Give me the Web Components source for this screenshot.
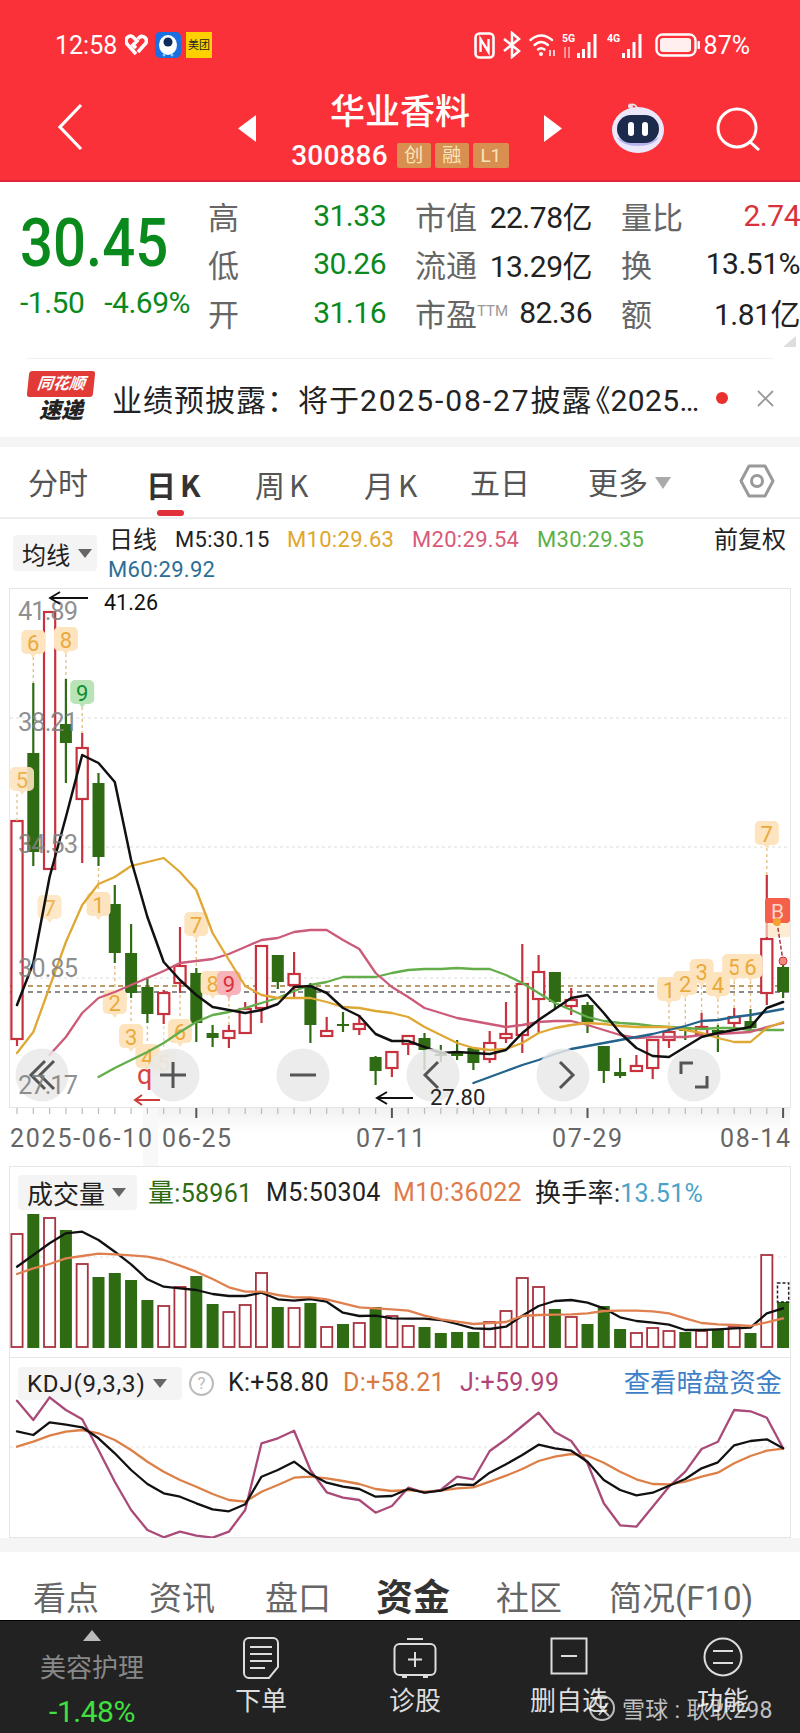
<!DOCTYPE html>
<html lang="zh">
<head>
<meta charset="utf-8">
<title>华业香料</title>
<style>
  html, body { margin: 0; padding: 0; background: #fff; }
  body {
    width: 800px;
    height: 1733px;
    overflow: hidden;
    display: flex;
    flex-direction: column;
    font-family: Roboto, "Noto Sans CJK SC", sans-serif;
  }
</style>
</head>
<body>
<stock-header></stock-header>
<quote-panel></quote-panel>
<news-strip></news-strip>
<period-tabs></period-tabs>
<kline-legend></kline-legend>
<kline-chart></kline-chart>
<volume-chart></volume-chart>
<kdj-chart></kdj-chart>
<detail-tabs></detail-tabs>
<bottom-bar></bottom-bar>

<script>
(() => {
  const X = i => 17 + 16.3 * i;

  // turn a list of y values into polyline points, offset is the crop origin I read them from
  const points = (vals, start = 0, off = 0, div = 1) =>
    vals.map((v, i) => `${X(i + start).toFixed(1)},${(off + v / div).toFixed(1)}`).join(' ');

  const line = (pts, color, w = 2.3) =>
    `<polyline points="${pts}" fill="none" stroke="${color}" stroke-width="${w}" stroke-linejoin="round" stroke-linecap="round"/>`;

  class Base extends HTMLElement {
    connectedCallback() {
      if (this.shadowRoot) { return; }
      this.attachShadow({ mode: 'open' });
      this.shadowRoot.innerHTML = this.render();
    }
  }

  class LegendChip extends Base {
    static get is() { return 'legend-chip'; }
    render() {
      return `
        <style>
          :host {
            display: inline-flex;
            align-items: center;
            box-sizing: border-box;
            background: #f5f4f4;
            border-radius: 4px;
            color: #222;
            font-size: 24px;
            padding-left: 9px;
            flex: none;
          }
          i {
            margin-left: 7px;
            width: 0;
            height: 0;
            border-left: 7px solid transparent;
            border-right: 7px solid transparent;
            border-top: 9px solid #666;
          }
        </style>
        <slot></slot><i></i>`;
    }
  }

  class StockHeader extends Base {
    static get is() { return 'stock-header'; }
    render() {
      return `
        <style>
          :host {
            display: block;
            flex: none;
            height: 182px;
            box-sizing: border-box;
            background: #fb3139;
            border-bottom: 2px solid #e2263a;
            color: #fff;
          }
          svg { display: block; flex: none; }
          .status {
            height: 90px;
            display: flex;
            align-items: center;
            justify-content: space-between;
            padding: 0 50px 0 55px;
            font-size: 25px;
          }
          .group { display: flex; align-items: center; }
          .nav { display: flex; align-items: flex-start; height: 90px; }
          .center { width: 288px; text-align: center; }
          .title { font-size: 35px; font-weight: 500; line-height: 44px; margin-top: 1px; }
          .sub { display: flex; align-items: center; justify-content: center; height: 40px; }
          .code { font-size: 28px; margin-right: 9px; font-weight: 500; letter-spacing: .2px; }
          .tag {
            background: #d88f50;
            color: #f9e6bd;
            font-size: 19px;
            width: 34px;
            height: 25px;
            line-height: 25px;
            text-align: center;
            margin-right: 4px;
            border-radius: 2px;
          }
        </style>
        <div class="status">
          <div class="group">
            <span>12:58</span>
            <svg style="margin-left:8px" width="23" height="22" viewBox="0 0 23 22"><path d="M11 20 L2 10 C-1 5 4 0 8 3 L12 7 L8 11 L11 14 M13 5 C16 0 23 3 21 9 L13 18" fill="none" stroke="#fff" stroke-width="3.5"/></svg>
            <svg style="margin-left:7px" width="26" height="26" viewBox="0 0 26 26"><rect width="26" height="26" rx="5" fill="#1c6fe0"/><ellipse cx="13" cy="13" rx="9" ry="10" fill="#fff"/><circle cx="13" cy="10" r="4.5" fill="#0d2a5c"/><circle cx="9" cy="23" r="1.4" fill="#8fd0ff"/><circle cx="17" cy="23" r="1.4" fill="#8fd0ff"/></svg>
            <svg style="margin-left:5px" width="26" height="26" viewBox="0 0 26 26"><rect width="26" height="26" fill="#fdd000"/><text x="13" y="17" font-size="11" text-anchor="middle" fill="#222">美团</text></svg>
          </div>
          <div class="group">
            <svg width="21" height="27" viewBox="0 0 21 27"><rect x="1.5" y="1.5" width="18" height="24" rx="4" fill="none" stroke="#fff" stroke-width="2.6"/><path d="M6.5 20V7l8 13V7" fill="none" stroke="#fff" stroke-width="2.4"/></svg>
            <svg style="margin-left:7px" width="20" height="28" viewBox="0 0 20 28"><path d="M2 8l15 12-7 6V2l7 6L2 20" fill="none" stroke="#fff" stroke-width="2.5"/></svg>
            <svg style="margin-left:7px" width="28" height="26" viewBox="0 0 28 26"><g fill="none" stroke="#fff" stroke-width="2.4" stroke-linecap="round"><path d="M1.5 8Q12-1 23 8"/><path d="M5.5 13Q12 7 19 13"/><path d="M9 17.5Q12 15 15.5 17.5"/></g><circle cx="12" cy="22" r="2" fill="#fff"/><path d="M21 24v-6M25 18v6" stroke="#fff" stroke-width="1.5"/></svg>
            <svg style="margin-left:5px" width="38" height="27" viewBox="0 0 38 27"><text x="0" y="10" font-size="10.5" font-weight="700" fill="#fff">5G</text><path d="M3 26V15M7 26V15" stroke="#ffb3b3" stroke-width="1.5"/><path d="M16.5 26v-5M21.5 26V17M27 26V10M33 26V2" stroke="#fff" stroke-width="3"/></svg>
            <svg style="margin-left:7px" width="38" height="27" viewBox="0 0 38 27"><text x="0" y="10" font-size="10.5" font-weight="700" fill="#fff">4G</text><path d="M16.5 26v-5M21.5 26V17M27 26V10M33 26V2" stroke="#fff" stroke-width="3"/></svg>
            <svg style="margin-left:10px" width="45" height="24" viewBox="0 0 45 24"><rect x="1.5" y="1.5" width="39" height="21" rx="6" fill="none" stroke="#fff" stroke-width="2.4"/><rect x="5" y="5" width="31" height="14" rx="3" fill="#fff" opacity=".92"/><rect x="42.5" y="8" width="2.5" height="8" rx="1" fill="#fff"/></svg>
            <span style="margin-left:4px">87%</span>
          </div>
        </div>
        <div class="nav">
          <svg style="margin:13px 0 0 57px" width="26" height="48" viewBox="0 0 26 48"><path d="M24 2L3 24l21 22" fill="none" stroke="#fff" stroke-width="3.2"/></svg>
          <svg style="margin:25px 0 0 155px" width="18" height="27" viewBox="0 0 18 27"><path d="M18 0v27L0 13.5z" fill="#fff"/></svg>
          <div class="center">
            <div class="title">华业香料</div>
            <div class="sub">
              <span class="code">300886</span>
              <span class="tag">创</span><span class="tag">融</span><span class="tag" style="width:36px;margin:0">L1</span>
            </div>
          </div>
          <svg style="margin-top:25px" width="18" height="27" viewBox="0 0 18 27"><path d="M0 0v27l18-13.5z" fill="#fff"/></svg>
          <svg style="margin:13px 0 0 49px" width="54" height="50" viewBox="0 0 54 50">
            <path d="M27 7C25 1 21 0 20 3" fill="none" stroke="#eee" stroke-width="1.6"/><circle cx="19.5" cy="3" r="2.5" fill="#f3d9e4"/>
            <ellipse cx="27" cy="27" rx="26" ry="23" fill="#ece8fb"/>
            <path d="M6 34c5 12 37 12 42 0-8 6-34 6-42 0z" fill="#b7b4ee"/>
            <rect x="6" y="12" width="42" height="28" rx="14" fill="#1c2a4c"/>
            <rect x="17" y="19" width="6" height="14" rx="3" fill="#fff"/><rect x="31" y="19" width="6" height="14" rx="3" fill="#fff"/>
          </svg>
          <svg style="margin:17px 0 0 51px" width="45" height="44" viewBox="0 0 45 44"><circle cx="21" cy="21" r="19" fill="none" stroke="#fff" stroke-width="3"/><path d="M33 34l10 9" stroke="#fff" stroke-width="3"/></svg>
        </div>`;
    }
  }

  class QuotePanel extends Base {
    static get is() { return 'quote-panel'; }
    render() {
      const rows = [
        [['高', '31.33', 'g'], ['市值', '22.78亿', 'd'], ['量比', '2.74', 'r']],
        [['低', '30.26', 'g'], ['流通', '13.29亿', 'd'], ['换', '13.51%', 'd']],
        [['开', '31.16', 'g'], ['市盈<sup>TTM</sup>', '82.36', 'd'], ['额', '1.81亿', 'd']]
      ];
      const cells = rows.map(r => r.map(([k, v, c]) =>
        `<div class="cell"><span class="k">${k}</span><span class="v ${c}">${v}</span></div>`).join('')).join('');
      return `
        <style>
          :host {
            display: block;
            flex: none;
            height: 176px;
            position: relative;
            box-sizing: border-box;
            padding: 9px 0 0 20px;
            background: #fff;
          }
          .wrap { display: grid; grid-template-columns: 188px 178px 206px 208px; }
          .left { grid-row: 1 / 4; color: #0a8a1c; }
          .price {
            font-size: 66px;
            font-weight: 500;
            line-height: 70px;
            margin-top: 18px;
            transform: scaleX(.88);
            transform-origin: left center;
            white-space: nowrap;
          }
          .chg { font-size: 30px; line-height: 32px; margin-top: 8px; display: flex; gap: 20px; letter-spacing: -.5px; white-space: nowrap; }
          .cell { height: 48.5px; display: flex; align-items: center; justify-content: space-between; box-sizing: border-box; }
          .cell:nth-child(3n+3), .cell:nth-child(3n+4) { padding-left: 29px; }
          .k { font-size: 31px; color: #666; white-space: nowrap; }
          .k sup { font-size: 15px; color: #999; vertical-align: 10px; line-height: 0; }
          .v { font-size: 30px; letter-spacing: -.5px; white-space: nowrap; }
          .g { color: #0a8a1c; }
          .d { color: #222; }
          .r { color: #d8333c; }
          .corner {
            position: absolute;
            right: 4px;
            bottom: 11px;
            width: 0;
            height: 0;
            border-bottom: 11px solid #ddd;
            border-left: 13px solid transparent;
          }
        </style>
        <div class="wrap">
          <div class="left">
            <div class="price">30.45</div>
            <div class="chg"><span>-1.50</span><span>-4.69%</span></div>
          </div>
          ${cells}
        </div>
        <i class="corner"></i>`;
    }
  }

  class NewsStrip extends Base {
    static get is() { return 'news-strip'; }
    render() {
      return `
        <style>
          :host { display: block; flex: none; height: 89px; background: #fff; }
          .rule { height: 1px; margin: 0 27px; background: #f0f0f0; }
          .row { height: 78px; display: flex; align-items: center; padding-left: 28px; box-sizing: border-box; }
          .logo { width: 66px; flex: none; text-align: center; }
          .top {
            background: #e23a36;
            color: #fff;
            font-size: 16px;
            font-weight: 700;
            font-style: italic;
            height: 26px;
            line-height: 26px;
            border-radius: 3px;
            transform: skewX(-6deg);
          }
          .bot { font-size: 22px; font-weight: 900; font-style: italic; line-height: 28px; color: #222; }
          .text { margin-left: 18px; font-size: 30px; letter-spacing: 1px; color: #222; white-space: nowrap; width: 594px; }
          .date { letter-spacing: 1.9px; }
          .fold { margin-left: -12px; letter-spacing: 0; }
          .tail { letter-spacing: .4px; }
          .dots { letter-spacing: -1.8px; }
          .dot { flex: none; width: 12px; height: 12px; border-radius: 50%; background: #e9302e; margin-left: 10px; }
          svg { margin-left: 29px; flex: none; }
          .band { height: 10px; background: #f5f5f5; }
        </style>
        <div class="rule"></div>
        <div class="row">
          <div class="logo"><div class="top">同花顺</div><div class="bot">速递</div></div>
          <div class="text">业绩预披露：将于<span class="date">2025-08-27</span>披露<span class="fold">《</span><span class="tail">2025</span><span class="dots">...</span></div>
          <i class="dot"></i>
          <svg width="17" height="17" viewBox="0 0 17 17"><path d="M1 1l15 15M16 1L1 16" stroke="#999" stroke-width="1.8"/></svg>
        </div>
        <div class="band"></div>`;
    }
  }

  class PeriodTabs extends Base {
    static get is() { return 'period-tabs'; }
    render() {
      return `
        <style>
          :host {
            display: flex;
            flex: none;
            height: 72px;
            box-sizing: border-box;
            padding: 14px 0 0 28px;
            border-bottom: 2px solid #eee;
            background: #fff;
            color: #555;
            font-size: 30px;
            position: relative;
          }
          span { line-height: 46px; flex: none; white-space: nowrap; }
          b { font-weight: 700; color: #333; }
          .mark {
            position: absolute;
            left: 157px;
            bottom: 1px;
            width: 27px;
            height: 6px;
            border-radius: 3px;
            background: #e2303a;
          }
          .tri {
            width: 0; height: 0; margin: 16px 0 0 7px; flex: none;
            border-left: 8px solid transparent;
            border-right: 8px solid transparent;
            border-top: 12px solid #aaa;
          }
          svg { margin: 3px 0 0 68px; flex: none; }
        </style>
        <span style="width:118px">分时</span>
        <span style="width:109px"><b>日<b style="margin-left:4px;font-family:'Noto Sans CJK SC'">K</b></b></span>
        <span style="width:109px">周<span style="margin-left:4px;font-family:'Noto Sans CJK SC'">K</span></span>
        <span style="width:106px">月<span style="margin-left:4px;font-family:'Noto Sans CJK SC'">K</span></span>
        <span style="width:118px">五日</span>
        <span style="width:60px">更多</span>
        <i class="tri"></i>
        <svg width="36" height="34" viewBox="0 0 36 34"><path d="M10 2h16l8 15-8 15H10L2 17z" fill="none" stroke="#999" stroke-width="3" stroke-linejoin="round"/><circle cx="18" cy="17" r="5.5" fill="none" stroke="#999" stroke-width="3"/></svg>
        <i class="mark"></i>`;
    }
  }

  class KlineLegend extends Base {
    static get is() { return 'kline-legend'; }
    render() {
      return `
        <style>
          :host {
            display: flex;
            flex: none;
            height: 69px;
            box-sizing: border-box;
            padding-left: 13px;
            font-size: 22px;
            letter-spacing: .3px;
            color: #222;
            background: #fff;
          }
          legend-chip { width: 84px; height: 36px; margin-top: 16px; }
          .col { margin: 6px 0 0 12px; flex: 1; }
          .row { display: flex; height: 30px; line-height: 30px; white-space: nowrap; }
          .row span { flex: none; }
          .cjk { font-size: 24px; letter-spacing: 0; }
        </style>
        <legend-chip>均线</legend-chip>
        <div class="col">
          <div class="row">
            <span class="cjk" style="width:66px">日线</span>
            <span style="width:112px">M5:30.15</span>
            <span style="width:125px;color:#dfa72e">M10:29.63</span>
            <span style="width:125px;color:#d95a78">M20:29.54</span>
            <span style="width:177px;color:#5cb04a">M30:29.35</span>
            <span class="cjk">前复权</span>
          </div>
          <div class="row" style="color:#2c6e96;margin-left:-1px">M60:29.92</div>
        </div>`;
    }
  }

  class KlineChart extends Base {
    static get is() { return 'kline-chart'; }
    render() {
      // [type, wickTop, bodyTop, bodyBottom, wickBottom], all y in page px
      const candles = [
        ['r',821,821,1039,1046],['g',683,753,852,866],['r',612,612,869,869],['g',679,724,743,783],
        ['r',733,748,799,863],['g',773,783,857,866],['g',885,904,953,963],['g',924,953,993,998],
        ['g',977,987,1014,1023],['r',990,993,1014,1024],['r',927,966,983,993],['g',968,973,1023,1042],
        ['g',1025,1033,1038,1047],['r',1025,1031,1038,1048],['r',1002,1009,1033,1034],['r',946,946,1008,1023],
        ['g',955,955,982,989],['r',952,974,985,997],['g',983,987,1025,1043],['r',1017,1031,1036,1037],
        ['g',1012,1024,1026,1032],['r',1015,1024,1029,1035],['g',1056,1057,1071,1085],['r',1051,1052,1068,1077],
        ['r',1036,1036,1044,1055],['g',1033,1038,1050,1070],['g',1045,1054,1056,1062],['g',1040,1052,1056,1060],
        ['g',1048,1048,1063,1070],['r',1031,1043,1059,1063],['r',1002,1034,1038,1043],['r',944,984,1035,1053],
        ['r',955,972,999,1033],['g',972,972,1002,1010],['r',988,1000,1006,1015],['g',1002,1005,1022,1033],
        ['g',1046,1046,1071,1083],['g',1058,1072,1076,1078],['r',1055,1066,1071,1071],['r',1040,1040,1068,1079],
        ['r',1027,1032,1040,1048],['g',1027,1028,1031,1040],['r',1013,1027,1034,1037],['g',1025,1030,1033,1052],
        ['r',1008,1017,1023,1030],['g',1009,1021,1028,1030],['r',875,939,993,1005],['g',962,967,992,998]
      ];
      const ma5 = [1005,963,877,817,755,763,782,860,917,962,980,995,1007,1010,1013,1010,1004,987,986,993,1008,1016,1034,1041,1041,1047,1053,1052,1053,1054,1050,1033,1020,1009,998,995,1013,1033,1048,1056,1057,1047,1037,1033,1030,1027,1008,1002];
      const ma10 = [1053,1032,987,942,905,884,877,866,862,858,872,890,933,960,986,995,998,998,998,1002,1007,1008,1011,1013,1017,1027,1035,1043,1048,1050,1049,1043,1033,1028,1025,1023,1024,1026,1027,1027,1027,1030,1033,1038,1042,1042,1028,1022];
      const ma20 = [1055,1037,1013,998,992,985,978,971,963,961,959,954,947,940,938,932,930,930,940,949,973,987,997,1008,1013,1018,1021,1024,1027,1025,1022,1021,1021,1025,1030,1035,1038,1037,1037,1037,1035,1034,1033,1032,1027,1023];
      const ma30 = [1077,1068,1060,1052,1043,1032,1022,1015,1012,1008,1003,998,991,985,982,977,977,977,973,970,969,969,968,969,969,975,983,993,1003,1010,1017,1021,1023,1024,1026,1027,1028,1029,1028,1028,1030,1030,1030];
      const ma60 = [1083,1077,1071,1065,1060,1054,1049,1046,1043,1040,1037,1034,1030,1026,1021,1020,1017,1015,1012,1009];

      const body = candles.map(([t, wt, bt, bb, wb], i) => {
        const x = X(i);
        if (t === 'r') {
          return `<path d="M${x} ${wt}V${bt}M${x} ${bb}V${wb}" stroke="#c8323f" stroke-width="2.2"/>
            <rect x="${x - 5.6}" y="${bt}" width="11.2" height="${bb - bt}" fill="#fff" stroke="#c8323f" stroke-width="2.2"/>`;
        }
        return `<path d="M${x} ${wt}V${wb}" stroke="#2e6b12" stroke-width="2.2"/>
          <rect x="${x - 6}" y="${bt}" width="12" height="${Math.max(bb - bt, 2)}" fill="#2e6b12"/>`;
      }).join('');

      const pin = (i, cy, label, stemTo, kind = 'o', dx = 0, fade = 1) => {
        const x = X(i) + dx;
        const skin = { o: ['#fde4bf', '#e9aa3b'], g: ['#b8e4b8', '#0f8f2a'], r: ['#f7b4b8', '#d8333c'] }[kind];
        return `<g opacity="${fade}">
          ${stemTo ? `<path d="M${X(i)} ${cy + 14}L${X(i)} ${stemTo}" stroke="#e3c189" stroke-width="1.4" stroke-dasharray="3 3"/>` : ''}
          <path d="M${x - 7} ${cy - 13}h14a5 5 0 0 1 5 5v14a5 5 0 0 1-5 5h-4l-3 4-3-4h-4a5 5 0 0 1-5-5v-14a5 5 0 0 1 5-5z" fill="${skin[0]}"/>
          <text x="${x}" y="${cy + 8}" font-size="22" text-anchor="middle" fill="${skin[1]}">${label}</text>
        </g>`;
      };

      const pins = [
        pin(0, 780, '5', 821, 'o', 5, .9), pin(1, 643, '6', 683), pin(2, 908, '7', null, 'o', 0, .85),
        pin(3, 640, '8', 679), pin(4, 693, '9', 733, 'g'), pin(5, 905, '1', 866),
        pin(6, 1003, '2', 963), pin(7, 1037, '3', 998), pin(8, 1057, '4', 1023),
        pin(9, 1063, '5', 1024, 'o', 0, .6), pin(10, 1032, '6', 993), pin(11, 925, '7', 968),
        pin(12, 984, '8', null), pin(13, 984, '9', 1025, 'r'), pin(40, 990, '1', 1027),
        pin(41, 984, '2', 1027), pin(42, 972, '3', 1013), pin(43, 985, '4', 1025),
        pin(44, 967, '5', 1008), pin(45, 967, '6', 1009), pin(46, 834, '7', 875)
      ].join('');

      const ticks = candles.map((c, i) => {
        const major = (i + 1) % 12 === 0;
        return `<path d="M${X(i)} 1108V${major ? 1118 : 1114}" stroke="${major ? '#555' : '#bbb'}" stroke-width="${major ? 2 : 1.2}"/>`;
      }).join('');

      const price = (t, y) => `<text x="18" y="${y}" font-size="25.5" textLength="60" fill="#808080" fill-opacity=".88">${t}</text>`;
      const date = (t, x, len) => `<text x="${x}" y="1147" font-size="25" textLength="${len}" fill="#666">${t}</text>`;
      const btn = (x, inner) => `<circle cx="${x}" cy="1075" r="26.5" fill="#e8e8e8" fill-opacity=".84"/><g fill="none" stroke="#555" stroke-width="3">${inner}</g>`;

      return `
        <style>
          :host { display: block; flex: none; height: 578px; background: #fff; }
          svg { display: block; }
        </style>
        <svg width="800" height="578" viewBox="0 588 800 578">
          <defs><linearGradient id="fade" x1="0" y1="0" x2="0" y2="1"><stop offset="0" stop-color="#f1f1f1"/><stop offset="1" stop-color="#fff"/></linearGradient></defs>
          <rect x="9.5" y="588.5" width="781" height="519" fill="none" stroke="#e6e6e6"/>
          <path d="M10 718H790M10 847H790M10 978H790" stroke="#ddd" stroke-dasharray="3 3"/>
          <rect x="143" y="1108" width="647" height="24" fill="url(#fade)"/>
          <rect x="143" y="1108" width="15" height="58" fill="#f8f8f8"/>
          <path d="M10 986H790" stroke="#a5793a" stroke-dasharray="5 4" stroke-width="1.3"/>
          <path d="M10 992H790" stroke="#666" stroke-dasharray="5 4" stroke-width="1.3"/>
          ${body}
          ${pins}
          ${line(points(ma30, 5), '#63ad4a')}
          ${line(points(ma20, 2), '#cc5a78')}
          ${line(points(ma10), '#dfa834')}
          ${line(points(ma60, 28), '#23638c')}
          ${line(points(ma5), '#111', 2.5)}
          <path d="M765 923h25v14h-25z" fill="#fde4bf" opacity=".7"/>
          <rect x="765" y="898" width="25" height="25" rx="3" fill="#f4604a"/>
          <text x="777.5" y="919" font-size="21" text-anchor="middle" fill="#fcd5c6">B</text>
          <path d="M777 922L783 961" stroke="#a83a4a" stroke-width="1.5" stroke-dasharray="4 2"/>
          <circle cx="777" cy="922" r="4" fill="#f5a030"/>
          <circle cx="783" cy="961" r="4" fill="#f08a80" stroke="#d8333c" stroke-width="1"/>
          ${price('41.89', 620)}${price('38.21', 731)}${price('34.53', 853)}${price('30.85', 977)}
          <path d="M50 598H88M60 592L50 598L60 604" fill="none" stroke="#111" stroke-width="1.8"/>
          <text x="104" y="610" font-size="21.5" fill="#111">41.26</text>
          <path d="M135 1100H160M142 1095L135 1100L142 1105" fill="none" stroke="#cf3b3b" stroke-width="2"/>
          <path d="M377 1098H413M387 1092L377 1098L387 1104" fill="none" stroke="#111" stroke-width="2"/>
          ${btn(42, '<path d="M45 1061L31 1075L45 1089M54 1061L40 1075L54 1089"/>')}
          ${price('27.17', 1094)}
          ${btn(173, '<path d="M173 1062V1088M160 1075H186"/>')}
          <text x="137" y="1084" font-size="27" fill="#d9443f">q</text>
          ${btn(303, '<path d="M290 1075H316"/>')}
          ${btn(433, '<path d="M438 1062L425 1075L438 1088"/>')}
          ${btn(563, '<path d="M560 1062L573 1075L560 1088"/>')}
          ${btn(694, '<path d="M681 1074V1063H693M707 1076V1087H695"/>')}
          <text x="430" y="1105" font-size="22" fill="#222">27.80</text>
          ${ticks}
          ${date('2025-06-10', 10, 142)}${date('06-25', 162, 69)}${date('07-11', 356, 69)}${date('07-29', 552, 70)}${date('08-14', 720, 70)}
        </svg>`;
    }
  }

  class VolumeChart extends Base {
    static get is() { return 'volume-chart'; }
    render() {
      const bars = [
        ['r',1234],['g',1214],['r',1218],['g',1230],['r',1264],['g',1277],['g',1273],['g',1280],['g',1300],['r',1306],['r',1287],['g',1276],
        ['g',1304],['r',1312],['r',1305],['r',1273],['g',1307],['r',1308],['g',1303],['r',1327],['g',1324],['r',1323],['g',1307],['r',1316],
        ['r',1326],['g',1327],['g',1333],['g',1332],['g',1332],['r',1322],['r',1311],['r',1278],['r',1287],['g',1309],['r',1317],['g',1324],
        ['g',1306],['g',1329],['r',1333],['r',1328],['r',1331],['g',1332],['r',1331],['g',1329],['r',1327],['g',1333],['r',1255],['g',1302]
      ];
      const black = [350,315,280,250,245,270,305,343,388,410,415,420,432,438,438,428,448,452,447,455,488,498,497,505,506,506,510,522,535,537,530,497,468,453,450,458,475,502,513,518,524,540,540,538,535,533,490,475];
      const orange = [372,355,342,325,318,311,313,316,320,330,347,365,387,412,425,425,435,442,442,448,460,472,475,478,482,497,508,515,522,519,516,498,495,494,493,490,483,482,482,484,490,505,519,523,525,528,517,505];
      const rects = bars.map(([t, top], i) => t === 'r'
        ? `<rect x="${X(i) - 5.6}" y="${top}" width="11.2" height="${1347 - top}" fill="#fff" stroke="#a8323f" stroke-width="1.8"/>`
        : `<rect x="${X(i) - 6}" y="${top}" width="12" height="${1348 - top}" fill="#2e6b12"/>`).join('');
      return `
        <style>
          :host {
            display: block;
            flex: none;
            height: 191px;
            box-sizing: border-box;
            margin-left: 9px;
            width: 782px;
            border: solid #e6e6e6;
            border-width: 1px 1px 0;
            font-size: 25px;
            color: #222;
          }
          svg { display: block; }
          .legend { height: 45px; display: flex; align-items: flex-start; white-space: nowrap; padding-left: 8px; }
          legend-chip { width: 119px; height: 35px; margin-top: 8px; font-size: 26px; }
          .legend span { flex: none; line-height: 28px; margin-top: 12px; letter-spacing: .3px; }
          .cjk { font-size: 26px; letter-spacing: 0; }
        </style>
        <div class="legend">
          <legend-chip>成交量</legend-chip>
          <span style="width:118px;margin-left:11px;color:#2e6b12"><span class="cjk" style="margin:0">量</span>:58961</span>
          <span style="width:127px">M5:50304</span>
          <span style="width:142px;color:#e07b4a">M10:36022</span>
          <span><span class="cjk" style="margin:0">换手率</span>:<span style="margin:0;color:#4aa3c8">13.51%</span></span>
        </div>
        <svg width="780" height="145" viewBox="10 1212 780 145">
          <path d="M10 1257H790" stroke="#e3e3e3" stroke-dasharray="3 3"/>
          ${rects}
          <rect x="${X(47) - 5.6}" y="1283" width="11.2" height="19" fill="#fff" stroke="#222" stroke-width="1.5" stroke-dasharray="3 2"/>
          ${line(points(black, 0, 1150, 3), '#111')}
          ${line(points(orange, 0, 1150, 3), '#e08050')}
        </svg>`;
    }
  }

  class KdjChart extends Base {
    static get is() { return 'kdj-chart'; }
    render() {
      const j = [182,240,172,210,238,330,425,510,570,592,575,587,593,575,510,310,295,272,390,457,473,480,518,498,443,458,450,410,418,333,298,258,218,276,303,370,490,556,560,500,440,395,327,305,210,214,233,325];
      const k = [274,285,247,254,262,295,340,390,432,460,470,490,508,514,493,410,390,365,402,428,440,447,470,468,447,458,452,433,435,398,373,345,314,325,332,365,420,450,466,458,437,417,385,367,316,303,298,325];
      const d = [320,305,287,275,270,280,300,330,365,395,420,440,462,480,485,455,435,413,410,415,423,432,447,453,450,455,452,445,442,425,407,387,363,350,342,347,368,395,418,432,433,425,410,398,370,348,332,326];
      return `
        <style>
          :host {
            display: block;
            flex: none;
            height: 181px;
            box-sizing: border-box;
            margin-left: 9px;
            width: 782px;
            border: 1px solid #e6e6e6;
            font-size: 25px;
            color: #222;
          }
          svg { display: block; }
          .legend { height: 38px; display: flex; align-items: flex-start; white-space: nowrap; padding: 0 8px; }
          legend-chip { width: 164px; height: 33px; margin-top: 9px; font-size: 24px; letter-spacing: .8px; }
          .q {
            flex: none;
            box-sizing: border-box;
            width: 25px;
            height: 25px;
            margin: 13px 0 0 7px;
            border: 2px solid #bbb;
            border-radius: 50%;
            color: #bbb;
            font-size: 17px;
            line-height: 21px;
            text-align: center;
          }
          span { flex: none; line-height: 28px; margin-top: 11px; letter-spacing: .3px; }
          .link { margin-left: auto; color: #3d80c8; font-size: 26.4px; letter-spacing: 0; }
        </style>
        <div class="legend">
          <legend-chip>KDJ(9,3,3)</legend-chip>
          <i class="q" style="font-style:normal">?</i>
          <span style="margin-left:14px;width:115px">K:+58.80</span>
          <span style="width:117px;color:#d97a42">D:+58.21</span>
          <span style="color:#b0457a">J:+59.99</span>
          <span class="link">查看暗盘资金</span>
        </div>
        <svg width="780" height="141" viewBox="10 1396 780 141" style="overflow:visible">
          <path d="M10 1447H790" stroke="#e3e3e3" stroke-dasharray="3 3"/>
          ${line(points(j, 0, 1340, 3), '#a94a78')}
          ${line(points(d, 0, 1340, 3), '#dc8048')}
          ${line(points(k, 0, 1340, 3), '#111')}
        </svg>`;
    }
  }

  class DetailTabs extends Base {
    static get is() { return 'detail-tabs'; }
    render() {
      const tabs = [['看点', 116], ['资讯', 116], ['盘口', 111], ['资金', 120], ['社区', 113], ['简况(F10)', 190]];
      return `
        <style>
          :host {
            display: flex;
            flex: none;
            height: 82px;
            box-sizing: border-box;
            padding: 38px 0 0 33px;
            background: linear-gradient(#f5f5f5 0 14px, #fff 14px);
            color: #666;
            font-size: 33px;
          }
          span { flex: none; line-height: 46px; white-space: nowrap; }
          .on { font-size: 37px; font-weight: 700; color: #333; }
        </style>
        ${tabs.map(([t, w], i) => `<span class="${i === 3 ? 'on' : ''}" style="width:${w}px">${t}</span>`).join('')}`;
    }
  }

  class BarAction extends Base {
    static get is() { return 'bar-action'; }
    render() {
      return `
        <style>
          :host { display: flex; flex-direction: column; align-items: center; color: #ddd; font-size: 26px; }
          .icon { height: 42px; margin-top: 16px; }
          .label { line-height: 36px; margin-top: 4px; white-space: nowrap; }
        </style>
        <div class="icon"><slot name="icon"></slot></div>
        <div class="label"><slot></slot></div>`;
    }
  }

  class BottomBar extends Base {
    static get is() { return 'bottom-bar'; }
    render() {
      return `
        <style>
          :host {
            display: grid;
            grid-template-columns: 184px repeat(4, 154px);
            height: 113px;
            box-sizing: border-box;
            border-top: 1px solid #000;
            background: #222;
            position: relative;
            flex: 1;
          }
          svg { display: block; }
          .sector { display: flex; flex-direction: column; align-items: center; }
          .tri {
            width: 0; height: 0; margin-top: 9px;
            border-left: 9px solid transparent;
            border-right: 9px solid transparent;
            border-bottom: 11px solid #bbb;
          }
          .name { font-size: 26px; color: #888; line-height: 34px; margin-top: 10px; }
          .chg { font-size: 30px; color: #3fe03f; line-height: 34px; margin-top: 10px; letter-spacing: -.5px; }
          .mark {
            position: absolute;
            left: 588px;
            top: 70px;
            display: flex;
            align-items: center;
            gap: 6px;
            color: rgba(255, 255, 255, .72);
            font-size: 23px;
            white-space: nowrap;
          }
          .mark span { letter-spacing: .3px; }
        </style>
        <div class="sector">
          <i class="tri"></i>
          <div class="name">美容护理</div>
          <div class="chg">-1.48%</div>
        </div>
        <bar-action>下单
          <svg slot="icon" width="36" height="42" viewBox="0 0 36 42"><path d="M6 1h24a5 5 0 0 1 5 5v24l-9 11H6a5 5 0 0 1-5-5V6a5 5 0 0 1 5-5z" fill="none" stroke="#ddd" stroke-width="2"/><path d="M7 10h22M7 17h22M7 24h22M7 31h15" stroke="#ddd" stroke-width="2"/></svg>
        </bar-action>
        <bar-action>诊股
          <svg slot="icon" width="44" height="42" viewBox="0 0 44 42"><path d="M14 2h16" stroke="#ddd" stroke-width="2"/><rect x="1.5" y="7" width="41" height="31" rx="5" fill="none" stroke="#ddd" stroke-width="2"/><path d="M22 15v15M15 22.500h14" stroke="#ddd" stroke-width="2"/><path d="M9 38h5v3H9zM30 38h5v3h-5z" fill="#ddd"/></svg>
        </bar-action>
        <bar-action>删自选
          <svg slot="icon" width="38" height="38" viewBox="0 0 38 38"><rect x="1.500" y="1.500" width="35" height="35" fill="none" stroke="#ddd" stroke-width="2"/><path d="M11 19h16" stroke="#ddd" stroke-width="2"/></svg>
        </bar-action>
        <bar-action>功能
          <svg slot="icon" width="40" height="40" viewBox="0 0 40 40"><circle cx="20" cy="20" r="18.500" fill="none" stroke="#ddd" stroke-width="2"/><path d="M10 14h20M10 26h20" stroke="#ddd" stroke-width="2"/></svg>
        </bar-action>
        <div class="mark">
          <svg width="28" height="28" viewBox="0 0 28 28"><circle cx="14" cy="14" r="12" fill="none" stroke="rgba(255,255,255,.7)" stroke-width="2"/><path d="M8 9l7 7M20 9l-9 12M15 16l6 6" fill="none" stroke="rgba(255,255,255,.7)" stroke-width="2"/></svg>
          <span>雪球 : 耿耿298</span>
        </div>`;
    }
  }

  [LegendChip, StockHeader, QuotePanel, NewsStrip, PeriodTabs, KlineLegend, KlineChart,
    VolumeChart, KdjChart, DetailTabs, BarAction, BottomBar].forEach(c => customElements.define(c.is, c));
})();
</script>
</body>
</html>
